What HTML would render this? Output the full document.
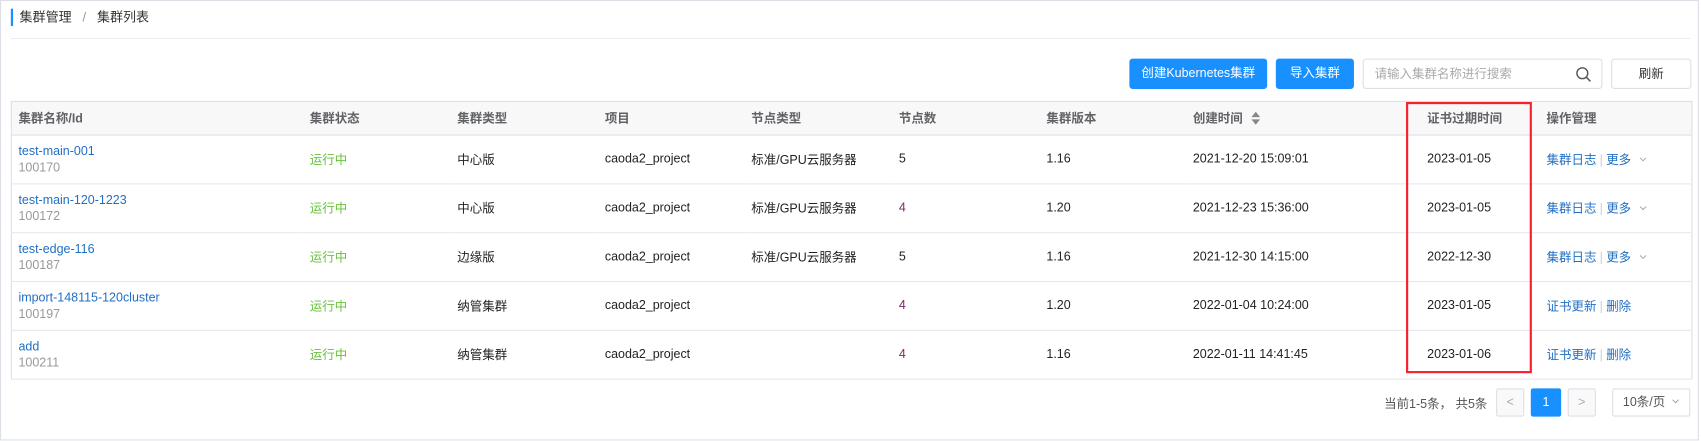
<!DOCTYPE html><html><head><meta charset="utf-8"><style>
*{box-sizing:border-box;margin:0;padding:0}
html,body{width:1701px;height:441px;overflow:hidden;background:#fff}
body{font-family:"Liberation Sans","Noto Sans CJK SC",sans-serif;font-size:11.5px;color:#333;position:relative}
#w{position:absolute;left:0;top:0;width:1568px;height:407px;transform:scale(1.0849);transform-origin:0 0}
.frame{position:absolute;left:0;top:0;width:1566px;height:406px;border:1px solid #dcdfe6}
.abs{position:absolute}
.bc{left:10px;top:8px;height:16px;border-left:2px solid #1890ff;padding-left:6px;line-height:16px;color:#333;font-size:12px}
.bc span{color:#999;margin:0 10px}
.sep{left:10px;top:35px;width:1548px;height:1px;background:#ebeef5}
.btn{top:54px;height:28px;line-height:28px;text-align:center;border-radius:3px;font-size:11.5px}
.pri{background:#1890ff;color:#fff}
.def{border:1px solid #dcdfe6;color:#333;background:#fff}
table{position:absolute;left:10px;top:93px;width:1549px;border-collapse:collapse;border:1px solid #dcdfe6;table-layout:fixed}
th{height:31px;background:#f8f8f9;color:#606266;font-weight:bold;text-align:left;font-size:11.5px;border-bottom:1px solid #dcdfe6;padding-left:6px;white-space:nowrap}
td{height:45px;border-bottom:1px solid #e6e8ee;padding-left:6px;color:#222;vertical-align:middle;white-space:nowrap}
td .id{color:#999;margin-top:3px}
a{color:#1f6fc4;text-decoration:none}
.g{color:#67c23a}
.p{color:#7a2a6a}
.bar{color:#ccc;margin:0 3px}
.c{padding-left:22px}
.red{left:1296px;top:94px;width:116px;height:250px;border:2px solid #f5222d}
.pg{top:358px;height:26px;line-height:24px;text-align:center;border:1px solid #dcdfe6;border-radius:2px;background:#f9f9f9;color:#aaa}
</style></head><body><div id="w">
<div class="frame"></div>
<div class="abs bc">集群管理<span>/</span>集群列表</div>
<div class="abs sep"></div>
<div class="abs btn pri" style="left:1041px;width:127px">创建Kubernetes集群</div>
<div class="abs btn pri" style="left:1176px;width:72px">导入集群</div>
<div class="abs btn def" style="left:1256px;width:221px;text-align:left;padding-left:10px;color:#aaa">请输入集群名称进行搜索
<svg style="position:absolute;right:9px;top:6px" width="15" height="15" viewBox="0 0 15 15"><circle cx="6.5" cy="6.5" r="5" fill="none" stroke="#555" stroke-width="1.3"/><path d="M10 10L14 14" stroke="#555" stroke-width="1.4"/></svg></div>
<div class="abs btn def" style="left:1485px;width:74px">刷新</div>
<table>
<colgroup><col style="width:269px"><col style="width:136px"><col style="width:136px"><col style="width:135px"><col style="width:136px"><col style="width:136px"><col style="width:135px"><col style="width:200px"><col style="width:126px"><col style="width:140px"></colgroup>
<tr><th>集群名称/Id</th><th>集群状态</th><th>集群类型</th><th>项目</th><th>节点类型</th><th>节点数</th><th>集群版本</th><th>创建时间 <svg width="9" height="12" viewBox="0 0 9 12" style="vertical-align:-2px;margin-left:4px"><path d="M4.5 0L8.5 5H0.5Z M4.5 12L8.5 7H0.5Z" fill="#888"/></svg></th><th class="c">证书过期时间</th><th>操作管理</th></tr>
<tr><td><a>test-main-001</a><div class="id">100170</div></td><td class="g">运行中</td><td>中心版</td><td>caoda2_project</td><td>标准/GPU云服务器</td><td>5</td><td>1.16</td><td>2021-12-20 15:09:01</td><td class="c">2023-01-05</td><td><a>集群日志</a><span class="bar">|</span><a>更多</a> <svg width="7" height="4" viewBox="0 0 8 5" style="margin-left:4px;vertical-align:2px"><path d="M0.5 0.5L4 4L7.5 0.5" fill="none" stroke="#99a" stroke-width="1"/></svg></td></tr>
<tr><td><a>test-main-120-1223</a><div class="id">100172</div></td><td class="g">运行中</td><td>中心版</td><td>caoda2_project</td><td>标准/GPU云服务器</td><td class="p">4</td><td>1.20</td><td>2021-12-23 15:36:00</td><td class="c">2023-01-05</td><td><a>集群日志</a><span class="bar">|</span><a>更多</a> <svg width="7" height="4" viewBox="0 0 8 5" style="margin-left:4px;vertical-align:2px"><path d="M0.5 0.5L4 4L7.5 0.5" fill="none" stroke="#99a" stroke-width="1"/></svg></td></tr>
<tr><td><a>test-edge-116</a><div class="id">100187</div></td><td class="g">运行中</td><td>边缘版</td><td>caoda2_project</td><td>标准/GPU云服务器</td><td>5</td><td>1.16</td><td>2021-12-30 14:15:00</td><td class="c">2022-12-30</td><td><a>集群日志</a><span class="bar">|</span><a>更多</a> <svg width="7" height="4" viewBox="0 0 8 5" style="margin-left:4px;vertical-align:2px"><path d="M0.5 0.5L4 4L7.5 0.5" fill="none" stroke="#99a" stroke-width="1"/></svg></td></tr>
<tr><td><a>import-148115-120cluster</a><div class="id">100197</div></td><td class="g">运行中</td><td>纳管集群</td><td>caoda2_project</td><td></td><td class="p">4</td><td>1.20</td><td>2022-01-04 10:24:00</td><td class="c">2023-01-05</td><td><a>证书更新</a><span class="bar">|</span><a>删除</a></td></tr>
<tr><td><a>add</a><div class="id">100211</div></td><td class="g">运行中</td><td>纳管集群</td><td>caoda2_project</td><td></td><td class="p">4</td><td>1.16</td><td>2022-01-11 14:41:45</td><td class="c">2023-01-06</td><td><a>证书更新</a><span class="bar">|</span><a>删除</a></td></tr>
</table>
<div class="abs red"></div>
<div class="abs" style="left:1200px;width:171px;text-align:right;top:364px;color:#555">当前1-5条， 共5条</div>
<div class="abs pg" style="left:1379px;width:26px">&lt;</div>
<div class="abs pg" style="left:1411px;width:28px;background:#1890ff;border-color:#1890ff;color:#fff">1</div>
<div class="abs pg" style="left:1445px;width:26px">&gt;</div>
<div class="abs pg" style="left:1486px;width:72px;background:#fff;color:#555">10条/页 <svg width="7" height="4" viewBox="0 0 8 5" style="margin-left:3px;vertical-align:2px"><path d="M0.5 0.5L4 4L7.5 0.5" fill="none" stroke="#99a" stroke-width="1"/></svg></div>
</div></body></html>
